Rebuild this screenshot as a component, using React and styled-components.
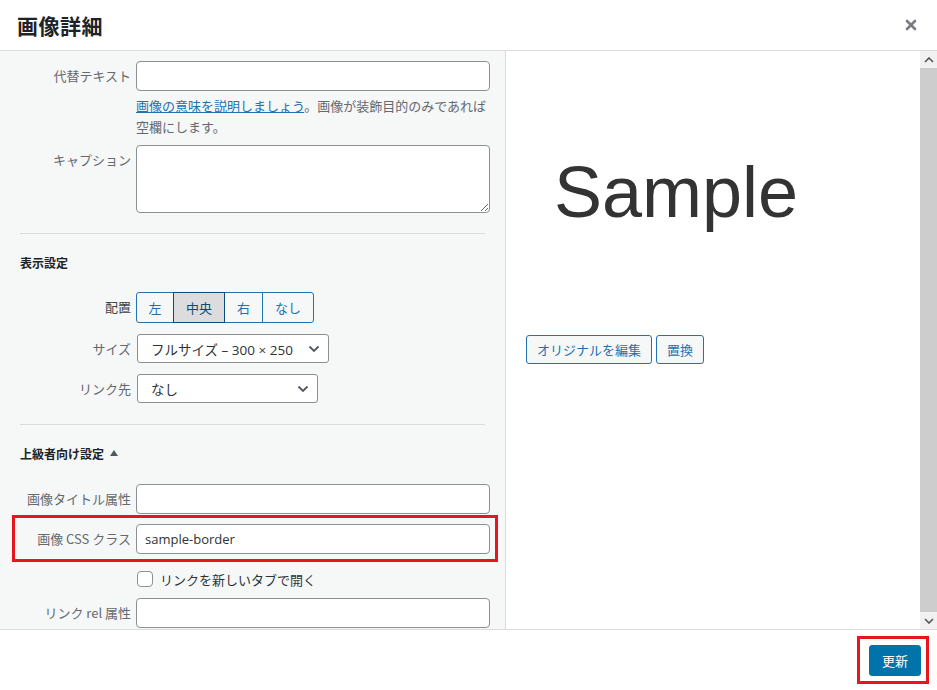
import React from "react";
import styled, { createGlobalStyle } from "styled-components";

const GlobalStyle = createGlobalStyle`
  html, body {
    margin: 0;
    padding: 0;
    background: #fff;
  }
  body {
    font-family: "Open Sans", "Noto Sans CJK JP", sans-serif;
    font-size: 13px;
    color: #2c3338;
  }
  * {
    box-sizing: border-box;
  }
`;

const Modal = styled.div`
  width: 937px;
  height: 690px;
  display: flex;
  flex-direction: column;
  background: #fff;
  overflow: hidden;
`;

const Header = styled.header`
  height: 51px;
  flex: none;
  display: flex;
  align-items: center;
  justify-content: space-between;
  padding: 0 19px 0 17px;
  border-bottom: 1px solid #dcdcde;
`;

const Title = styled.h1`
  margin: 0;
  font-family: "Noto Sans CJK JP", sans-serif;
  font-size: 21px;
  font-weight: 700;
  color: #1d2327;
  letter-spacing: 0.5px;
`;

const Close = styled.button`
  border: none;
  background: none;
  padding: 0;
  width: 14px;
  height: 14px;
  display: flex;
  align-items: center;
  justify-content: center;
  cursor: pointer;
`;

const Body = styled.div`
  flex: 1;
  display: flex;
  min-height: 0;
`;

const Settings = styled.div`
  width: 506px;
  flex: none;
  background: #f6f7f7;
  border-right: 1px solid #dcdcde;
  padding: 10px 15px 0 0;
  overflow: hidden;
`;

const Row = styled.div`
  display: grid;
  grid-template-columns: ${(p) => p.$labelWidth || 136}px 1fr;
  align-items: start;
  margin-top: ${(p) => p.$mt || 0}px;
`;

const Label = styled.label`
  display: block;
  text-align: right;
  padding-right: 5px;
  line-height: 30px;
  font-family: "Noto Sans CJK JP", sans-serif;
  font-size: 13px;
  color: ${(p) => (p.$dark ? "#3c434a" : "#646970")};
  white-space: nowrap;
`;

const TextInput = styled.div`
  height: 30px;
  width: 100%;
  background: #fff;
  border: 1px solid #8c8f94;
  border-radius: 4px;
  padding: 0 8px;
  line-height: 28px;
  font-family: "Open Sans", "Noto Sans CJK JP", sans-serif;
  font-size: 13px;
  color: #2c3338;
`;

const TextArea = styled.textarea`
  display: block;
  width: 100%;
  height: 68px;
  margin: 0;
  background: #fff;
  border: 1px solid #8c8f94;
  border-radius: 4px;
  resize: vertical;
  font-family: inherit;
`;

const Help = styled.p`
  margin: 4px 0 0 136px;
  font-family: "Noto Sans CJK JP", sans-serif;
  font-size: 13px;
  line-height: 21px;
  color: #646970;
  white-space: nowrap;
  a {
    color: #2271b1;
    text-decoration: underline;
  }
`;

const Divider = styled.hr`
  margin: ${(p) => p.$mt || 20}px 5px 0 20px;
  border: none;
  border-top: 1px solid #dcdcde;
  height: 0;
`;

const SectionTitle = styled.h2`
  margin: 19px 0 0 20px;
  font-family: "Noto Sans CJK JP", sans-serif;
  font-size: 12px;
  font-weight: 700;
  line-height: 20px;
  color: #1d2327;
  display: flex;
  align-items: center;
  gap: 6px;
`;

const Caret = styled.span`
  width: 0;
  height: 0;
  border-left: 4px solid transparent;
  border-right: 4px solid transparent;
  border-bottom: 6px solid #50575e;
  margin-bottom: 2px;
`;

const ButtonGroup = styled.div`
  display: flex;
  height: 31px;
`;

const GroupButton = styled.button`
  height: 31px;
  padding: 0;
  width: ${(p) => p.$width}px;
  margin-left: -1px;
  border: 1px solid ${(p) => (p.$pressed ? "#0a4b78" : "#2271b1")};
  background: ${(p) => (p.$pressed ? "#dcdcde" : "#f6f7f7")};
  color: ${(p) => (p.$pressed ? "#0a4b78" : "#2271b1")};
  font-family: "Noto Sans CJK JP", sans-serif;
  font-size: 13px;
  position: relative;
  z-index: ${(p) => (p.$pressed ? 1 : 0)};
  &:first-child {
    margin-left: 0;
    border-radius: 3px 0 0 3px;
  }
  &:last-child {
    border-radius: 0 3px 3px 0;
  }
`;

const Select = styled.div`
  height: 29px;
  width: ${(p) => p.$width}px;
  margin-left: 1px;
  background: #fff;
  border: 1px solid #8c8f94;
  border-radius: 3px;
  padding: 0 8px 0 13px;
  display: flex;
  align-items: center;
  justify-content: space-between;
  font-family: "Open Sans", "Noto Sans CJK JP", sans-serif;
  font-size: 13.5px;
  color: #2c3338;
  white-space: nowrap;
`;

const Highlight = styled.div`
  margin: 1px -8px 0 12px;
  padding: 6px 5px 5px 0;
  border: 3px solid #e8141e;
`;

const CheckRow = styled.div`
  margin: 9px 0 0 137px;
  display: flex;
  align-items: center;
  gap: 7px;
  height: 16px;
  font-family: "Noto Sans CJK JP", sans-serif;
  font-size: 13px;
  color: #2c3338;
`;

const CheckBox = styled.span`
  width: 16px;
  height: 16px;
  flex: none;
  background: #fff;
  border: 1px solid #8c8f94;
  border-radius: 4px;
`;

const Preview = styled.div`
  flex: 1;
  padding: 16px 20px 0;
  background: #fff;
`;

const ImageBox = styled.div`
  width: 300px;
  height: 250px;
  display: flex;
  align-items: center;
  justify-content: center;
  font-family: "Liberation Sans", Arial, sans-serif;
  font-size: 72px;
  color: #333;
`;

const Actions = styled.div`
  margin-top: 18px;
  display: flex;
  gap: 4px;
`;

const SecondaryButton = styled.button`
  height: 29px;
  padding: 0 10px;
  border: 1px solid #2271b1;
  border-radius: 3px;
  background: #f6f7f7;
  color: #2271b1;
  font-family: "Noto Sans CJK JP", sans-serif;
  font-size: 13px;
`;

const Scrollbar = styled.div`
  width: 17px;
  flex: none;
  display: flex;
  flex-direction: column;
  background: #f1f1f1;
`;

const ScrollArrow = styled.div`
  height: 17px;
  flex: none;
  display: flex;
  align-items: center;
  justify-content: center;
`;

const ScrollThumb = styled.div`
  flex: 1;
  background: #cdcdcd;
`;

const Footer = styled.footer`
  height: 61px;
  flex: none;
  border-top: 1px solid #dcdcde;
  display: flex;
  justify-content: flex-end;
  align-items: flex-start;
  padding: 6px 8px 0 0;
`;

const FooterHighlight = styled.div`
  padding: 6px 5px 5px 9px;
  border: 3px solid #e8141e;
`;

const PrimaryButton = styled.button`
  width: 52px;
  height: 31px;
  padding: 0;
  border: 1px solid #0073aa;
  border-radius: 3px;
  background: #0073aa;
  color: #fff;
  font-family: "Noto Sans CJK JP", sans-serif;
  font-size: 13px;
`;

const Chevron = ({ up }) => (
  <svg width="10" height="6" viewBox="0 0 10 6">
    <path
      d={up ? "M1 5 L5 1 L9 5" : "M1 1 L5 5 L9 1"}
      fill="none"
      stroke="#50575e"
      strokeWidth="1.6"
    />
  </svg>
);

const SelectArrow = () => (
  <svg width="12" height="8" viewBox="0 0 12 8">
    <path d="M1.5 1.5 L6 6 L10.5 1.5" fill="none" stroke="#50575e" strokeWidth="1.8" />
  </svg>
);

const App = () => {
  return (
    <>
      <GlobalStyle />
      <Modal>
        <Header>
          <Title>画像詳細</Title>
          <Close aria-label="閉じる">
            <svg width="12" height="12" viewBox="0 0 12 12">
              <path d="M2 2 L10 10 M10 2 L2 10" stroke="#787c82" strokeWidth="2.6" strokeLinecap="round" />
            </svg>
          </Close>
        </Header>
        <Body>
          <Settings>
            <Row>
              <Label>代替テキスト</Label>
              <TextInput />
            </Row>
            <Help>
              <a href="#alt">画像の意味を説明しましょう</a>。画像が装飾目的のみであれば
              <br />
              空欄にします。
            </Help>
            <Row $mt={8}>
              <Label>キャプション</Label>
              <TextArea />
            </Row>
            <Divider $mt={20} />
            <SectionTitle>表示設定</SectionTitle>
            <Row $mt={19}>
              <Label $dark>配置</Label>
              <ButtonGroup>
                <GroupButton $width={38}>左</GroupButton>
                <GroupButton $width={52} $pressed>中央</GroupButton>
                <GroupButton $width={39}>右</GroupButton>
                <GroupButton $width={52}>なし</GroupButton>
              </ButtonGroup>
            </Row>
            <Row $mt={11}>
              <Label>サイズ</Label>
              <Select $width={192}>
                <span>フルサイズ – 300 × 250</span>
                <SelectArrow />
              </Select>
            </Row>
            <Row $mt={10}>
              <Label>リンク先</Label>
              <Select $width={181}>
                <span>なし</span>
                <SelectArrow />
              </Select>
            </Row>
            <Divider $mt={20} />
            <SectionTitle>
              上級者向け設定 <Caret />
            </SectionTitle>
            <Row $mt={20}>
              <Label>画像タイトル属性</Label>
              <TextInput />
            </Row>
            <Highlight>
              <Row $labelWidth={121}>
                <Label>画像 CSS クラス</Label>
                <TextInput>sample-border</TextInput>
              </Row>
            </Highlight>
            <CheckRow>
              <CheckBox />
              <span>リンクを新しいタブで開く</span>
            </CheckRow>
            <Row $mt={11}>
              <Label>リンク rel 属性</Label>
              <TextInput />
            </Row>
          </Settings>
          <Preview>
            <ImageBox>Sample</ImageBox>
            <Actions>
              <SecondaryButton>オリジナルを編集</SecondaryButton>
              <SecondaryButton>置換</SecondaryButton>
            </Actions>
          </Preview>
          <Scrollbar>
            <ScrollArrow>
              <Chevron up />
            </ScrollArrow>
            <ScrollThumb />
            <ScrollArrow>
              <Chevron />
            </ScrollArrow>
          </Scrollbar>
        </Body>
        <Footer>
          <FooterHighlight>
            <PrimaryButton>更新</PrimaryButton>
          </FooterHighlight>
        </Footer>
      </Modal>
    </>
  );
};

export default App;
